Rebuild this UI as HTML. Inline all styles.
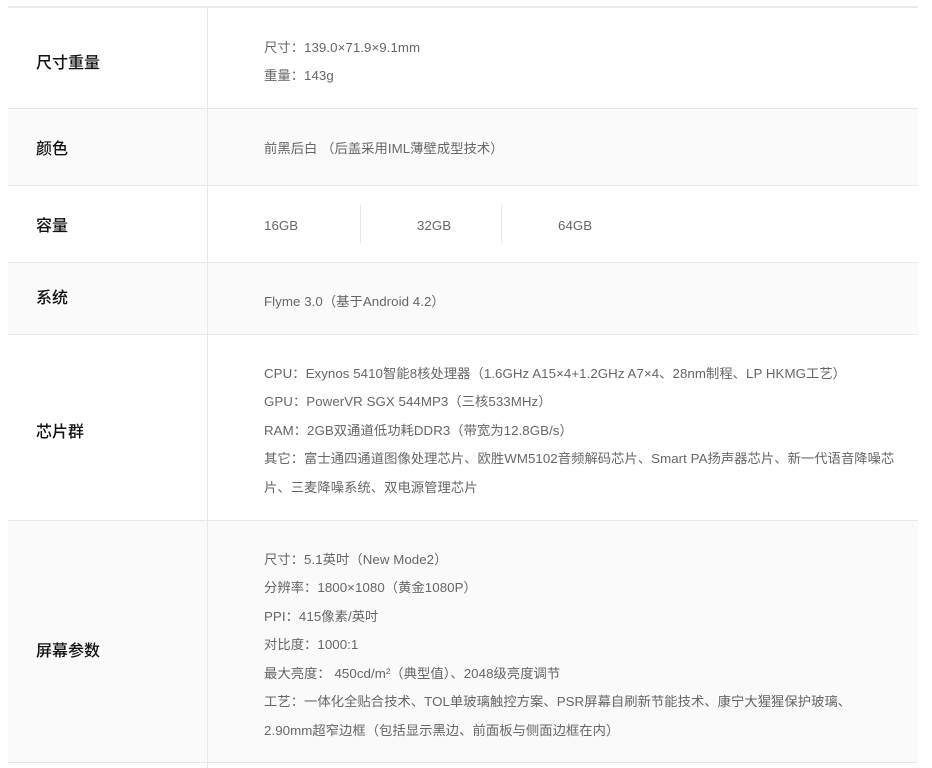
<!DOCTYPE html>
<html><head><meta charset="utf-8"><style>
body{margin:0;width:932px;height:768px;background:#fff;position:relative;overflow:hidden;font-family:"Liberation Sans","Noto Sans CJK SC",sans-serif;}
.row{position:absolute;left:8px;width:910px;border-bottom:1px solid #e8e8e8;box-sizing:border-box;}
.g{background:#fafafa;}
.lab{position:absolute;left:36px;font-size:16px;color:#111;font-weight:500;line-height:20px;transform:translateY(-50%);font-family:"Noto Sans CJK SC",sans-serif;}
.v{position:absolute;left:264px;font-size:13.3px;letter-spacing:0.05px;color:#666;line-height:18px;white-space:nowrap;transform:translateY(-50%);}
.vl{position:absolute;left:207px;width:1px;background:#e8e8e8;top:8px;height:760px;}
</style></head><body>
<div style="position:absolute;left:8px;top:6px;width:910px;height:2px;background:#eaeaea"></div>
<div class="row" style="top:8px;height:101px"></div>
<div class="row g" style="top:109px;height:77px"></div>
<div class="row" style="top:186px;height:77px"></div>
<div class="row g" style="top:263px;height:72px"></div>
<div class="row" style="top:335px;height:186px"></div>
<div class="row g" style="top:521px;height:242px"></div>
<div class="vl"></div>
<div style="position:absolute;left:360px;top:205px;width:1px;height:38px;background:#e8e8e8"></div>
<div style="position:absolute;left:501px;top:205px;width:1px;height:38px;background:#e8e8e8"></div>

<div class="lab" style="top:61px">尺寸重量</div>
<div class="lab" style="top:147px">颜色</div>
<div class="lab" style="top:224px">容量</div>
<div class="lab" style="top:296px">系统</div>
<div class="lab" style="top:430px">芯片群</div>
<div class="lab" style="top:649px">屏幕参数</div>

<div class="v" style="top:48px">尺寸：139.0×71.9×9.1mm</div>
<div class="v" style="top:76px">重量：143g</div>
<div class="v" style="top:149px">前黑后白 （后盖采用IML薄壁成型技术）</div>
<div class="v" style="top:226px">16GB</div>
<div class="v" style="top:226px;left:417px">32GB</div>
<div class="v" style="top:226px;left:558px">64GB</div>
<div class="v" style="top:302px">Flyme 3.0（基于Android 4.2）</div>
<div class="v" style="top:374px">CPU：Exynos 5410智能8核处理器（1.6GHz A15×4+1.2GHz A7×4、28nm制程、LP HKMG工艺）</div>
<div class="v" style="top:402px">GPU：PowerVR SGX 544MP3（三核533MHz）</div>
<div class="v" style="top:431px">RAM：2GB双通道低功耗DDR3（带宽为12.8GB/s）</div>
<div class="v" style="top:459px">其它：富士通四通道图像处理芯片、欧胜WM5102音频解码芯片、Smart PA扬声器芯片、新一代语音降噪芯</div>
<div class="v" style="top:488px">片、三麦降噪系统、双电源管理芯片</div>
<div class="v" style="top:560px">尺寸：5.1英吋（New Mode2）</div>
<div class="v" style="top:588px">分辨率：1800×1080（黄金1080P）</div>
<div class="v" style="top:617px">PPI：415像素/英吋</div>
<div class="v" style="top:645px">对比度：1000:1</div>
<div class="v" style="top:674px">最大亮度： 450cd/m²（典型值）、2048级亮度调节</div>
<div class="v" style="top:702px">工艺：一体化全贴合技术、TOL单玻璃触控方案、PSR屏幕自刷新节能技术、康宁大猩猩保护玻璃、</div>
<div class="v" style="top:731px">2.90mm超窄边框（包括显示黑边、前面板与侧面边框在内）</div>
</body></html>
